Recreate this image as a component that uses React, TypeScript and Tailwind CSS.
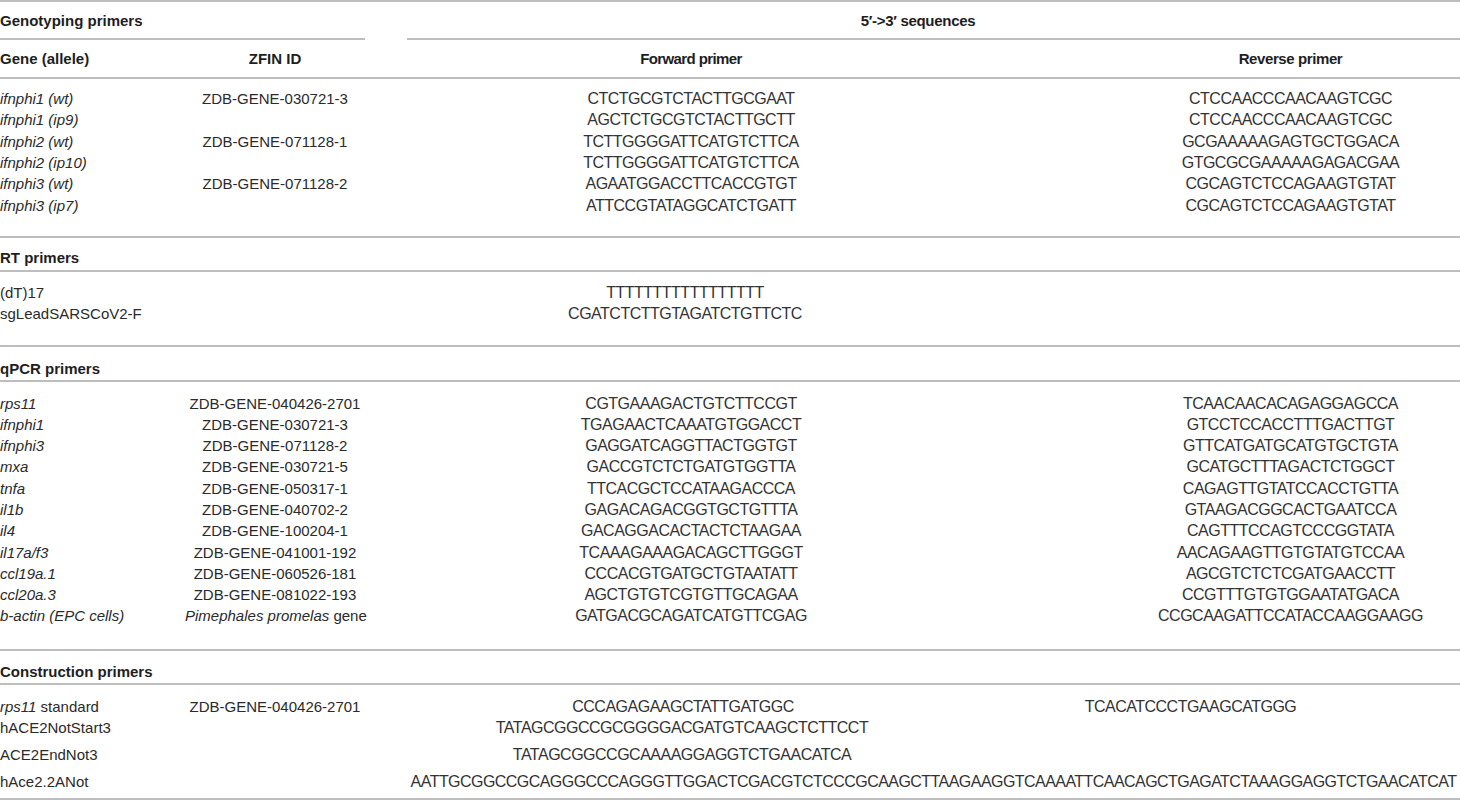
import React from "react";

type Row = {
  gene: React.ReactNode;
  zfin?: React.ReactNode;
  fwd?: string;
  rev?: string;
};

const genotyping: Row[] = [
  { gene: <i>ifnphi1 (wt)</i>, zfin: "ZDB-GENE-030721-3", fwd: "CTCTGCGTCTACTTGCGAAT", rev: "CTCCAACCCAACAAGTCGC" },
  { gene: <i>ifnphi1 (ip9)</i>, fwd: "AGCTCTGCGTCTACTTGCTT", rev: "CTCCAACCCAACAAGTCGC" },
  { gene: <i>ifnphi2 (wt)</i>, zfin: "ZDB-GENE-071128-1", fwd: "TCTTGGGGATTCATGTCTTCA", rev: "GCGAAAAAGAGTGCTGGACA" },
  { gene: <i>ifnphi2 (ip10)</i>, fwd: "TCTTGGGGATTCATGTCTTCA", rev: "GTGCGCGAAAAAGAGACGAA" },
  { gene: <i>ifnphi3 (wt)</i>, zfin: "ZDB-GENE-071128-2", fwd: "AGAATGGACCTTCACCGTGT", rev: "CGCAGTCTCCAGAAGTGTAT" },
  { gene: <i>ifnphi3 (ip7)</i>, fwd: "ATTCCGTATAGGCATCTGATT", rev: "CGCAGTCTCCAGAAGTGTAT" },
];

const rt: Row[] = [
  { gene: "(dT)17", fwd: "TTTTTTTTTTTTTTTTT" },
  { gene: "sgLeadSARSCoV2-F", fwd: "CGATCTCTTGTAGATCTGTTCTC" },
];

const qpcr: Row[] = [
  { gene: <i>rps11</i>, zfin: "ZDB-GENE-040426-2701", fwd: "CGTGAAAGACTGTCTTCCGT", rev: "TCAACAACACAGAGGAGCCA" },
  { gene: <i>ifnphi1</i>, zfin: "ZDB-GENE-030721-3", fwd: "TGAGAACTCAAATGTGGACCT", rev: "GTCCTCCACCTTTGACTTGT" },
  { gene: <i>ifnphi3</i>, zfin: "ZDB-GENE-071128-2", fwd: "GAGGATCAGGTTACTGGTGT", rev: "GTTCATGATGCATGTGCTGTA" },
  { gene: <i>mxa</i>, zfin: "ZDB-GENE-030721-5", fwd: "GACCGTCTCTGATGTGGTTA", rev: "GCATGCTTTAGACTCTGGCT" },
  { gene: <i>tnfa</i>, zfin: "ZDB-GENE-050317-1", fwd: "TTCACGCTCCATAAGACCCA", rev: "CAGAGTTGTATCCACCTGTTA" },
  { gene: <i>il1b</i>, zfin: "ZDB-GENE-040702-2", fwd: "GAGACAGACGGTGCTGTTTA", rev: "GTAAGACGGCACTGAATCCA" },
  { gene: <i>il4</i>, zfin: "ZDB-GENE-100204-1", fwd: "GACAGGACACTACTCTAAGAA", rev: "CAGTTTCCAGTCCCGGTATA" },
  { gene: <i>il17a/f3</i>, zfin: "ZDB-GENE-041001-192", fwd: "TCAAAGAAAGACAGCTTGGGT", rev: "AACAGAAGTTGTGTATGTCCAA" },
  { gene: <i>ccl19a.1</i>, zfin: "ZDB-GENE-060526-181", fwd: "CCCACGTGATGCTGTAATATT", rev: "AGCGTCTCTCGATGAACCTT" },
  { gene: <i>ccl20a.3</i>, zfin: "ZDB-GENE-081022-193", fwd: "AGCTGTGTCGTGTTGCAGAA", rev: "CCGTTTGTGTGGAATATGACA" },
  {
    gene: <i>b-actin (EPC cells)</i>,
    zfin: (
      <>
        <i>Pimephales promelas</i> gene
      </>
    ),
    fwd: "GATGACGCAGATCATGTTCGAG",
    rev: "CCGCAAGATTCCATACCAAGGAAGG",
  },
];

function Rule() {
  return <div className="h-[2px] bg-[#bdbdbd]" />;
}

function DataRow({ row }: { row: Row }) {
  return (
    <div className="grid grid-cols-[185px_180px_652px_1fr] h-[21.3px] items-center">
      <div className="whitespace-nowrap">{row.gene}</div>
      <div className="text-center whitespace-nowrap">{row.zfin}</div>
      <div className="text-center text-[16px] tracking-[-0.5px] text-[#333]">{row.fwd}</div>
      <div className="text-center pl-[104px] text-[16px] tracking-[-0.5px] text-[#333]">{row.rev}</div>
    </div>
  );
}

function SectionTitle({ label, pt, h }: { label: string; pt: string; h: string }) {
  return (
    <div className={`${pt} ${h} font-bold text-[#1e1e1e]`}>
      <div className="leading-[21px]">{label}</div>
    </div>
  );
}

export default function App() {
  return (
    <div className="w-[1460px] h-[800px] overflow-hidden bg-white text-[15px] leading-[21px] text-[#2a2a2a] font-['Liberation_Sans',Arial,sans-serif]">
      <Rule />

      {/* table head */}
      <div className="grid grid-cols-[365px_1fr] h-[36px] items-center font-bold text-[#1e1e1e]">
        <div>Genotyping primers</div>
        <div className="text-center pl-[11px] tracking-[-0.3px]">{"5′->3′ sequences"}</div>
      </div>
      <div className="grid grid-cols-[365px_1fr]">
        <Rule />
        <div className="ml-[42px]">
          <Rule />
        </div>
      </div>
      <div className="grid grid-cols-[185px_180px_652px_1fr] h-[37px] items-center font-bold text-[#1e1e1e]">
        <div>Gene (allele)</div>
        <div className="text-center">ZFIN ID</div>
        <div className="text-center tracking-[-0.6px]">Forward primer</div>
        <div className="text-center pl-[104px] tracking-[-0.4px]">Reverse primer</div>
      </div>
      <Rule />

      <div className="pt-[9px] pb-[20px]">
        {genotyping.map((r, i) => (
          <DataRow key={i} row={r} />
        ))}
      </div>
      <Rule />

      <SectionTitle label="RT primers" pt="pt-[9px]" h="h-[32px]" />
      <Rule />
      <div className="pt-[10px] pb-[21px]">
        {rt.map((r, i) => (
          <div key={i} className="grid grid-cols-[365px_652px_1fr] h-[21.3px] items-center">
            <div>{r.gene}</div>
            <div className="text-center pr-[12px] text-[16px] tracking-[-0.5px] text-[#333]">{r.fwd}</div>
            <div />
          </div>
        ))}
      </div>
      <Rule />

      <SectionTitle label="qPCR primers" pt="pt-[11px]" h="h-[33px]" />
      <Rule />
      <div className="pt-[10px] pb-[22px]">
        {qpcr.map((r, i) => (
          <DataRow key={i} row={r} />
        ))}
      </div>
      <Rule />

      <SectionTitle label="Construction primers" pt="pt-[10px]" h="h-[32px]" />
      <Rule />
      <div className="pt-[11px] pb-[5px]">
        <div className="grid grid-cols-[185px_180px_652px_1fr] h-[21px] items-center">
          <div>
            <i>rps11</i> standard
          </div>
          <div className="text-center">ZDB-GENE-040426-2701</div>
          <div className="text-center pr-[16px] text-[16px] tracking-[-0.5px] text-[#333]">CCCAGAGAAGCTATTGATGGC</div>
          <div className="text-center pr-[96px] text-[16px] tracking-[-0.5px] text-[#333]">TCACATCCCTGAAGCATGGG</div>
        </div>
        <div className="grid grid-cols-[365px_652px_1fr] h-[22px] items-center">
          <div>hACE2NotStart3</div>
          <div className="text-center pr-[18px] text-[16px] tracking-[-0.5px] text-[#333]">TATAGCGGCCGCGGGGACGATGTCAAGCTCTTCCT</div>
          <div />
        </div>
        <div className="grid grid-cols-[365px_652px_1fr] h-[32px] items-center">
          <div>ACE2EndNot3</div>
          <div className="text-center pr-[18px] text-[16px] tracking-[-0.5px] text-[#333]">TATAGCGGCCGCAAAAGGAGGTCTGAACATCA</div>
          <div />
        </div>
        <div className="grid grid-cols-[365px_1fr] h-[22px] items-center">
          <div>hAce2.2ANot</div>
          <div className="text-center pl-[42px] whitespace-nowrap text-[16px] tracking-[-0.55px] text-[#333]">
            AATTGCGGCCGCAGGGCCCAGGGTTGGACTCGACGTCTCCCGCAAGCTTAAGAAGGTCAAAATTCAACAGCTGAGATCTAAAGGAGGTCTGAACATCAT
          </div>
        </div>
      </div>
      <Rule />
    </div>
  );
}
